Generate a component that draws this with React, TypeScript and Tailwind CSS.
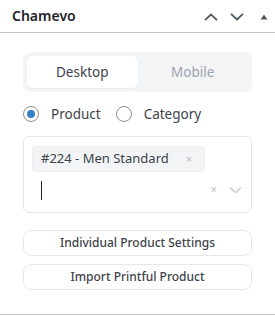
import React, { useState } from "react";

const font = { fontFamily: '"Noto Sans", "Open Sans", sans-serif' };

function ChevronUp() {
  return (
    <svg width="14" height="8" viewBox="0 0 14 8" fill="none">
      <path d="M1 7.2 L7 1.5 L13 7.2" stroke="#50575e" strokeWidth="1.8" />
    </svg>
  );
}

function ChevronDown() {
  return (
    <svg width="14" height="8" viewBox="0 0 14 8" fill="none">
      <path d="M1 0.8 L7 6.5 L13 0.8" stroke="#50575e" strokeWidth="1.8" />
    </svg>
  );
}

function Triangle() {
  return (
    <svg width="8" height="6" viewBox="0 0 8 6">
      <path d="M0.5 5.5 L4 0.8 L7.5 5.5 Z" fill="#50575e" />
    </svg>
  );
}

export default function App() {
  const [tab, setTab] = useState<"desktop" | "mobile">("desktop");
  const [mode, setMode] = useState<"product" | "category">("product");

  return (
    <div className="w-[275px] h-[316px] bg-white text-[#1d2327] overflow-hidden" style={font}>
      {/* panel header */}
      <div className="flex items-center h-[33px] pl-3 pr-[7px] border-b border-[#c3c4c7]">
        <span className="text-[14px] font-semibold flex-1 pb-[2px]">Chamevo</span>
        <div className="flex items-center pt-[1px]">
          <ChevronUp />
          <span className="ml-3">
            <ChevronDown />
          </span>
          <span className="ml-4 flex">
            <Triangle />
          </span>
        </div>
      </div>

      <div className="px-[23px] pt-[19px] border-b border-[#c3c4c7] h-[282px]">
        {/* device tabs */}
        <div className="flex bg-[#f3f4f6] rounded-lg p-1 h-[40px]">
          <button
            type="button"
            onClick={() => setTab("desktop")}
            className={`flex-1 rounded-md text-[13.5px] ${tab === "desktop" ? "bg-white text-[#3c434a] shadow-[0_1px_2px_rgba(0,0,0,0.04)]" : "text-[#9ca3af]"}`}
          >
            Desktop
          </button>
          <button
            type="button"
            onClick={() => setTab("mobile")}
            className={`flex-1 rounded-md text-[13.5px] ${tab === "mobile" ? "bg-white text-[#3c434a]" : "text-[#9ca3af]"}`}
          >
            Mobile
          </button>
        </div>

        {/* product / category */}
        <div className="flex items-center mt-[13px] h-[18px] text-[13.5px] text-[#3c434a]">
          <label className="flex items-center cursor-pointer" onClick={() => setMode("product")}>
            <span className="w-4 h-4 rounded-full border border-[#8c8f94] flex items-center justify-center">
              {mode === "product" && <span className="w-2 h-2 rounded-full bg-[#3582c4]" />}
            </span>
            <span className="ml-3">Product</span>
          </label>
          <label className="flex items-center cursor-pointer ml-[15px]" onClick={() => setMode("category")}>
            <span className="w-4 h-4 rounded-full border border-[#8c8f94] flex items-center justify-center">
              {mode === "category" && <span className="w-2 h-2 rounded-full bg-[#3582c4]" />}
            </span>
            <span className="ml-3">Category</span>
          </label>
        </div>

        {/* selected products */}
        <div className="mt-[13px] h-[77px] border border-[#e5e7eb] rounded-md pl-2 pr-[9px] pt-2">
          <div className="inline-flex items-center h-[26px] bg-[#f3f4f6] border border-[#eceef0] rounded pl-2 pr-3 text-[13px] text-[#3c434a]">
            #224 - Men Standard
            <span className="ml-[17px] text-[11px] text-[#b4b9be]">×</span>
          </div>
          <div className="flex items-center h-[35px] pt-[2px]">
            <span className="ml-[9px] w-px h-[19px] bg-[#1d2327]" />
            <span className="flex-1" />
            <span className="text-[12px] text-[#c0c6cc]">×</span>
            <svg className="ml-[12px]" width="13" height="8" viewBox="0 0 13 8" fill="none">
              <path d="M1 1.5 L6.5 6.5 L12 1.5" stroke="#c3c9cf" strokeWidth="1.3" />
            </svg>
          </div>
        </div>

        {/* actions */}
        <div className="mt-[17px] flex flex-col gap-2">
          <button type="button" className="h-[26px] rounded-lg border border-[#e5e7eb] text-[12px] font-medium text-[#3c434a]">
            Individual Product Settings
          </button>
          <button type="button" className="h-[26px] rounded-lg border border-[#e5e7eb] text-[12px] font-medium text-[#3c434a]">
            Import Printful Product
          </button>
        </div>
      </div>
    </div>
  );
}
